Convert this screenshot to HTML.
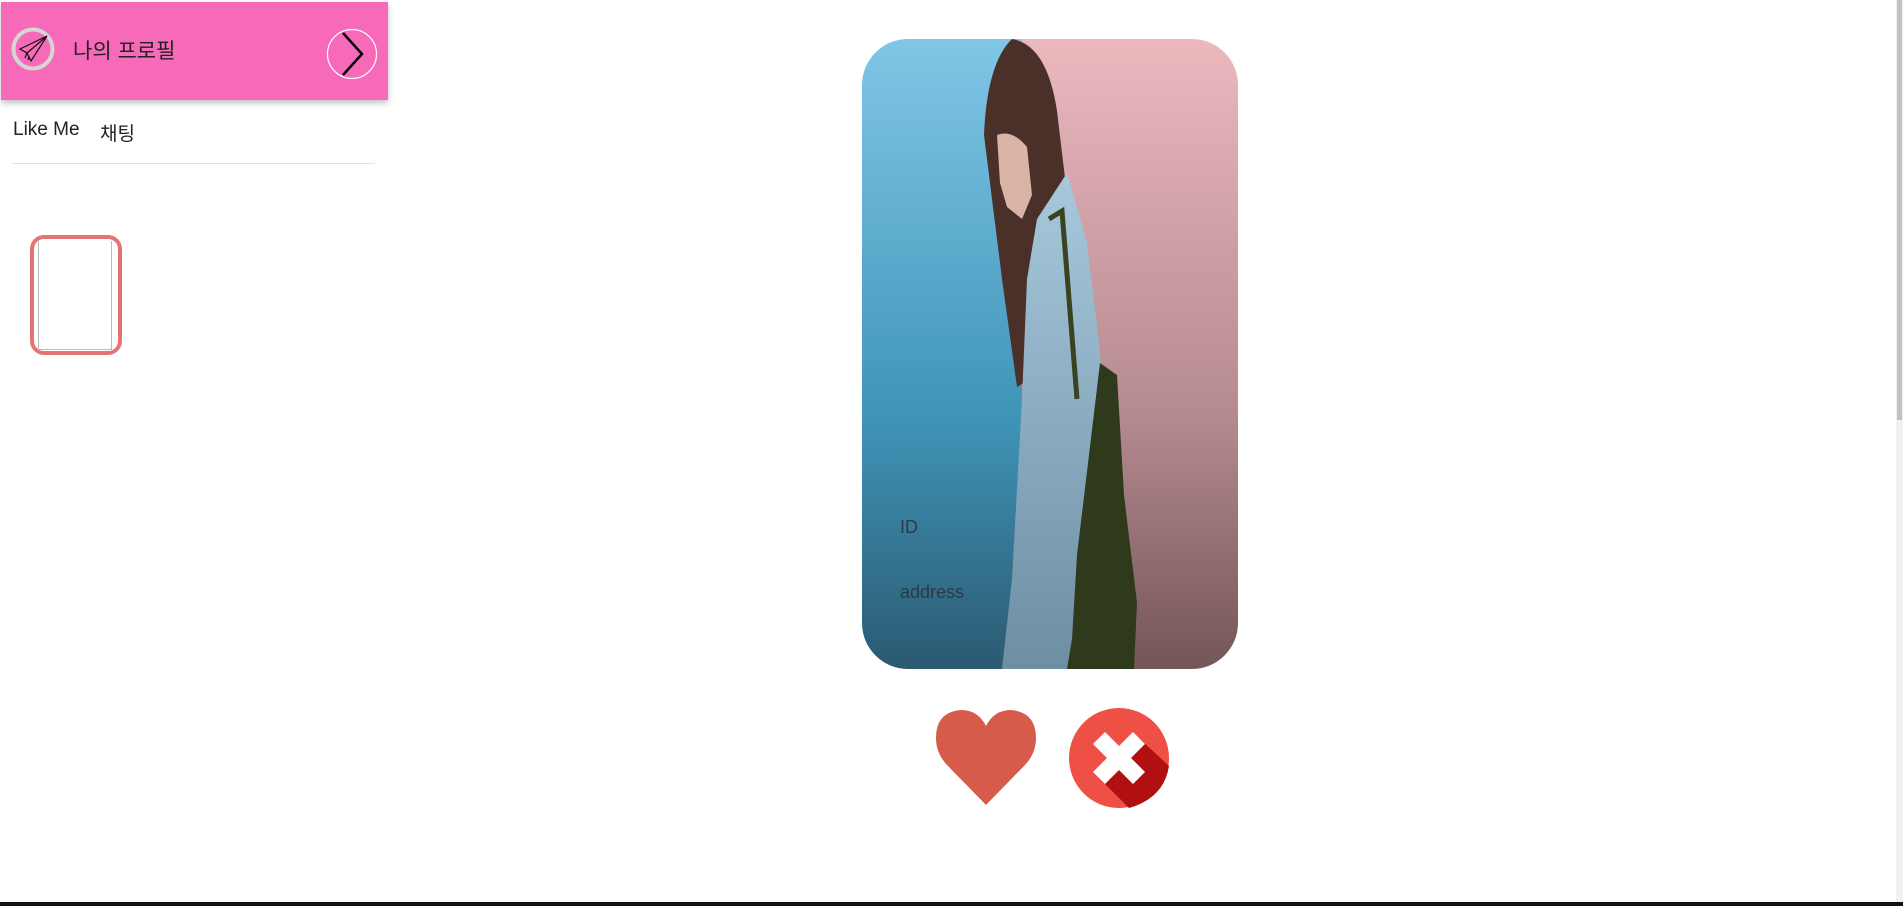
<!DOCTYPE html>
<html><head><meta charset="utf-8"><style>
*{margin:0;padding:0;box-sizing:border-box}
body{width:1903px;height:906px;overflow:hidden;background:#fff;font-family:"Liberation Sans","Noto Sans CJK KR",sans-serif;position:relative}
.hdr{position:absolute;left:1px;top:2px;width:387px;height:98px;background:#f76ab9;box-shadow:0 3px 6px rgba(0,0,0,.25)}
.t{position:absolute;left:72px;top:33px;font-size:21px;color:#222}
.nav{position:absolute;top:119px;font-size:19px;color:#222}
.line{position:absolute;left:13px;top:163px;width:362px;height:1px;background:#e0e0e0}
.thumb{position:absolute;left:30px;top:235px;width:92px;height:120px;border:4px solid #e57373;border-radius:14px}
.thumb i{position:absolute;left:4px;top:2px;width:74px;height:109px;border:1px solid #bbb;border-top:none}
.card{position:absolute;left:862px;top:39px;width:376px;height:630px;border-radius:46px;overflow:hidden}
.bar{position:absolute;left:0;top:902px;width:1903px;height:4px;background:#111}
.sb{position:absolute;left:1896px;top:0;width:7px;height:902px;background:#f1f1f1}
.sb i{position:absolute;left:1px;top:0;width:5px;height:420px;background:#c1c1c1}
</style></head><body>
<div class="hdr">
<svg style="position:absolute;left:10px;top:25px" width="44" height="44" viewBox="0 0 44 44"><circle cx="22" cy="22" r="19.5" fill="none" stroke="#d5d5d5" stroke-width="4"/><path d="M36 9 L9 22 L16 26 Z M36 9 L16 26 L20 34 Z M16 26 L14 31 M18 29 L17 33" fill="none" stroke="#111" stroke-width="1.2"/></svg>
<div class="t">나의 프로필</div>
<svg style="position:absolute;left:325px;top:26px" width="52" height="52" viewBox="0 0 52 52"><circle cx="26" cy="26" r="24.5" fill="none" stroke="#fff" stroke-width="1.2"/><path d="M17 5 L36 26 L17 47" fill="none" stroke="#000" stroke-width="2.5"/></svg>
</div>
<div class="nav" style="left:13px">Like Me</div>
<div class="nav" style="left:100px">채팅</div>
<div class="line"></div>
<div class="thumb"><i></i></div>
<div class="card">
<svg width="376" height="630" viewBox="0 0 376 630">
<defs>
<linearGradient id="b" x1="0" y1="0" x2="0" y2="1"><stop offset="0" stop-color="#80c6e6"/><stop offset=".6" stop-color="#3f94b8"/><stop offset="1" stop-color="#2b5a72"/></linearGradient>
<linearGradient id="p" x1="0" y1="0" x2="0" y2="1"><stop offset="0" stop-color="#ebb8be"/><stop offset=".6" stop-color="#b48a90"/><stop offset="1" stop-color="#745558"/></linearGradient>
<linearGradient id="j" x1="0" y1="0" x2="0" y2="1"><stop offset="0" stop-color="#a8c8dc"/><stop offset="1" stop-color="#6e8ea4"/></linearGradient>
</defs>
<rect width="160" height="630" fill="url(#b)"/>
<rect x="160" width="216" height="630" fill="url(#p)"/>
<path d="M150 0 Q185 6 195 72 L205 156 L190 228 L175 336 L155 348 L140 240 L122 96 Q125 24 150 0Z" fill="#4a3028"/>
<path d="M135 96 Q150 90 165 108 L170 156 L160 180 L145 168 L138 144Z" fill="#d9b3a6"/>
<path d="M175 180 L205 134 L225 204 L238 312 L245 480 L240 560 L215 552 L210 630 L140 630 L150 540 L160 360 L165 240Z" fill="url(#j)"/>
<path d="M238 324 L255 336 L262 456 L275 564 L272 630 L205 630 L210 600 L215 516Z" fill="#2f3a1c"/>
<path d="M187 180 L200 172 L215 360" fill="none" stroke="#3a4220" stroke-width="5"/>
<text x="38" y="494" font-size="18" fill="#2e3a42" font-family="Liberation Sans,sans-serif">ID</text>
<text x="38" y="559" font-size="18" fill="#2e3a42" font-family="Liberation Sans,sans-serif">address</text>
</svg>
</div>
<svg style="position:absolute;left:936px;top:708px" width="100" height="100" viewBox="0 0 100 100"><path d="M50 97 L12 58 Q0 46 0 30 Q0 4 25 2 Q42 2 50 18 Q58 2 75 2 Q100 4 100 30 Q100 46 88 58 Z" fill="#d75b4b"/></svg>
<svg style="position:absolute;left:1069px;top:708px" width="100" height="100" viewBox="0 0 100 100"><circle cx="50" cy="50" r="50" fill="#ee5046"/><path d="M70 30 L100 58 Q95 90 60 100 L30 70Z" fill="#b01010"/><path d="M30 30 L70 70 M70 30 L30 70" stroke="#fff" stroke-width="17"/></svg>
<div class="sb"><i></i></div>
<div class="bar"></div>
</body></html>
